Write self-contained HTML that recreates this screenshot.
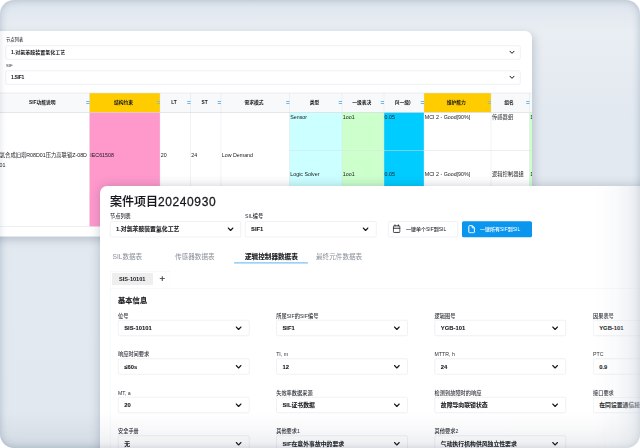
<!DOCTYPE html>
<html lang="zh-CN"><head><meta charset="utf-8"><title>案件项目20240930</title>
<style>
html,body{margin:0;padding:0;background:#fff;}
body{width:640px;height:448px;overflow:hidden;font-family:"Liberation Sans","Noto Sans CJK SC",sans-serif;}
#stage{position:relative;width:640px;height:448px;overflow:hidden;border-radius:14px;background:linear-gradient(180deg,#dee5ed 0px,#e9eef3 31px,#e3e9f0 110px,#e1e8ef 100%);box-shadow:inset 0 0 10px rgba(120,140,170,.22);}
#sc{position:absolute;left:0;top:0;width:2560px;height:1792px;transform:scale(0.25);transform-origin:0 0;}
#sc div,#sc svg{position:absolute;}
.card{background:#fff;}
.t{white-space:nowrap;}
#fadeR{position:absolute;right:0;top:186px;width:44px;height:262px;background:linear-gradient(90deg,rgba(216,222,229,0),rgba(216,222,229,.16) 50%,rgba(216,222,229,.6));}
#fadeB{position:absolute;left:0;bottom:0;width:640px;height:36px;background:linear-gradient(180deg,rgba(70,85,110,0),rgba(70,85,110,.035) 45%,rgba(70,85,110,.10));}
#vig{position:absolute;left:0;top:0;width:640px;height:448px;border-radius:14px;box-shadow:inset 0 0 7px rgba(90,110,140,.22);pointer-events:none;}
</style></head>
<body><div id="stage"><div id="sc">
<div class="card" style="left:-80px;top:124px;width:2208px;height:822.4px;border-radius:0 28px 0 0;box-shadow:6px 12px 32px rgba(40,60,90,.22);overflow:hidden">
<div class="t " style="left:104px;top:22.76px;line-height:24.08px;font-size:17.2px;font-weight:500;color:#2c3038;">节点列表</div>
<div style="left:102px;top:58px;width:2060px;height:56px;border:2px solid #dde1e6;border-radius:6px;box-sizing:border-box;background:#fff"></div>
<div class="t " style="left:124px;top:71.6px;line-height:28px;font-size:20px;font-weight:700;color:#16181c;">1.对氯苯胺装置氢化工艺</div>
<div class="t " style="left:104px;top:123.96px;line-height:24.08px;font-size:17.2px;font-weight:500;color:#2c3038;">SIF</div>
<div style="left:102px;top:158px;width:2060px;height:56px;border:2px solid #dde1e6;border-radius:6px;box-sizing:border-box;background:#fff"></div>
<div class="t " style="left:124px;top:171.6px;line-height:28px;font-size:20px;font-weight:700;color:#16181c;letter-spacing:-1.2px">1.SIF1</div>
<svg style="left:2116px;top:77.4px;width:24px;height:16.4px" viewBox="-1 -1 6.0 4.1"><path d="M0 0 L2.0 2.1 L4.0 0" fill="none" stroke="#16181c" stroke-width="1.0" stroke-linecap="round" stroke-linejoin="round"/></svg>
<svg style="left:2116px;top:177.4px;width:24px;height:16.4px" viewBox="-1 -1 6.0 4.1"><path d="M0 0 L2.0 2.1 L4.0 0" fill="none" stroke="#16181c" stroke-width="1.0" stroke-linecap="round" stroke-linejoin="round"/></svg>
<div style="left:0px;top:248px;width:2240px;height:78px;background:#f8f9fa"></div>
<div style="left:70px;top:248px;width:368px;height:78px;background:#f8f9fa"></div>
<div style="left:70px;top:326px;width:368px;height:456px;background:#fff"></div>
<div style="left:438px;top:248px;width:282px;height:78px;background:#ffcc00"></div>
<div style="left:438px;top:326px;width:282px;height:456px;background:#ff99cc"></div>
<div style="left:720px;top:248px;width:122px;height:78px;background:#f8f9fa"></div>
<div style="left:720px;top:326px;width:122px;height:456px;background:#fff"></div>
<div style="left:842px;top:248px;width:122px;height:78px;background:#f8f9fa"></div>
<div style="left:842px;top:326px;width:122px;height:456px;background:#fff"></div>
<div style="left:964px;top:248px;width:274px;height:78px;background:#f8f9fa"></div>
<div style="left:964px;top:326px;width:274px;height:456px;background:#fff"></div>
<div style="left:1238px;top:248px;width:210px;height:78px;background:#f8f9fa"></div>
<div style="left:1238px;top:326px;width:210px;height:456px;background:#ccffff"></div>
<div style="left:1448px;top:248px;width:168px;height:78px;background:#f8f9fa"></div>
<div style="left:1448px;top:326px;width:168px;height:456px;background:#ccffcc"></div>
<div style="left:1616px;top:248px;width:160px;height:78px;background:#f8f9fa"></div>
<div style="left:1616px;top:326px;width:160px;height:456px;background:#00ccff"></div>
<div style="left:1776px;top:248px;width:268px;height:78px;background:#ffcc00"></div>
<div style="left:1776px;top:326px;width:268px;height:456px;background:#fff"></div>
<div style="left:2044px;top:248px;width:154px;height:78px;background:#f8f9fa"></div>
<div style="left:2044px;top:326px;width:154px;height:456px;background:#fff"></div>
<div style="left:2198px;top:248px;width:122px;height:78px;background:#f8f9fa"></div>
<div style="left:2198px;top:326px;width:122px;height:456px;background:#ccffcc"></div>
<div style="left:0px;top:247px;width:2240px;height:2px;background:#dcdfe3"></div>
<div style="left:0px;top:324.8px;width:2240px;height:2.4px;background:#cdd1d6"></div>
<div style="left:0px;top:781px;width:2240px;height:2px;background:#dcdfe3"></div>
<div style="left:437px;top:248px;width:2px;height:534px;background:#dcdfe3;opacity:.8"></div>
<div style="left:719px;top:248px;width:2px;height:534px;background:#dcdfe3;opacity:.8"></div>
<div style="left:841px;top:248px;width:2px;height:534px;background:#dcdfe3;opacity:.8"></div>
<div style="left:963px;top:248px;width:2px;height:534px;background:#dcdfe3;opacity:.8"></div>
<div style="left:1237px;top:248px;width:2px;height:534px;background:#dcdfe3;opacity:.8"></div>
<div style="left:1447px;top:248px;width:2px;height:534px;background:#dcdfe3;opacity:.8"></div>
<div style="left:1615px;top:248px;width:2px;height:534px;background:#dcdfe3;opacity:.8"></div>
<div style="left:1775px;top:248px;width:2px;height:534px;background:#dcdfe3;opacity:.8"></div>
<div style="left:2043px;top:248px;width:2px;height:534px;background:#dcdfe3;opacity:.8"></div>
<div style="left:2197px;top:248px;width:2px;height:534px;background:#dcdfe3;opacity:.8"></div>
<div style="left:1238px;top:476px;width:1082px;height:2px;background:#dcdfe3"></div>
<div style="left:1238px;top:627px;width:1082px;height:2px;background:#dcdfe3"></div>
<div class="t " style="left:-350.8px;width:1200px;text-align:center;top:273.36px;line-height:26.88px;font-size:19.2px;font-weight:700;color:#16181c;">SIF功能说明</div>
<div style="left:424.8px;top:280.4px;width:12.8px;height:2.8px;background:#3fa2ea"></div>
<div style="left:424.8px;top:288.4px;width:12.8px;height:2.8px;background:#3fa2ea"></div>
<div class="t " style="left:-25.8px;width:1200px;text-align:center;top:273.36px;line-height:26.88px;font-size:19.2px;font-weight:700;color:#16181c;">结构约束</div>
<div style="left:706.8px;top:280.4px;width:12.8px;height:2.8px;background:#7fb9c9"></div>
<div style="left:706.8px;top:288.4px;width:12.8px;height:2.8px;background:#7fb9c9"></div>
<div class="t " style="left:176.2px;width:1200px;text-align:center;top:273.36px;line-height:26.88px;font-size:19.2px;font-weight:700;color:#16181c;">LT</div>
<div style="left:828.8px;top:280.4px;width:12.8px;height:2.8px;background:#3fa2ea"></div>
<div style="left:828.8px;top:288.4px;width:12.8px;height:2.8px;background:#3fa2ea"></div>
<div class="t " style="left:298.2px;width:1200px;text-align:center;top:273.36px;line-height:26.88px;font-size:19.2px;font-weight:700;color:#16181c;">ST</div>
<div style="left:950.8px;top:280.4px;width:12.8px;height:2.8px;background:#3fa2ea"></div>
<div style="left:950.8px;top:288.4px;width:12.8px;height:2.8px;background:#3fa2ea"></div>
<div class="t " style="left:496.2px;width:1200px;text-align:center;top:273.36px;line-height:26.88px;font-size:19.2px;font-weight:700;color:#16181c;">需求模式</div>
<div style="left:1224.8px;top:280.4px;width:12.8px;height:2.8px;background:#3fa2ea"></div>
<div style="left:1224.8px;top:288.4px;width:12.8px;height:2.8px;background:#3fa2ea"></div>
<div class="t " style="left:738.2px;width:1200px;text-align:center;top:273.36px;line-height:26.88px;font-size:19.2px;font-weight:700;color:#16181c;">类型</div>
<div style="left:1434.8px;top:280.4px;width:12.8px;height:2.8px;background:#3fa2ea"></div>
<div style="left:1434.8px;top:288.4px;width:12.8px;height:2.8px;background:#3fa2ea"></div>
<div class="t " style="left:927.2px;width:1200px;text-align:center;top:273.36px;line-height:26.88px;font-size:19.2px;font-weight:700;color:#16181c;">一级表决</div>
<div style="left:1602.8px;top:280.4px;width:12.8px;height:2.8px;background:#3fa2ea"></div>
<div style="left:1602.8px;top:288.4px;width:12.8px;height:2.8px;background:#3fa2ea"></div>
<div class="t " style="left:1091.2px;width:1200px;text-align:center;top:273.36px;line-height:26.88px;font-size:19.2px;font-weight:700;color:#16181c;">β(一级)</div>
<div style="left:1762.8px;top:280.4px;width:12.8px;height:2.8px;background:#3fa2ea"></div>
<div style="left:1762.8px;top:288.4px;width:12.8px;height:2.8px;background:#3fa2ea"></div>
<div class="t " style="left:1305.2px;width:1200px;text-align:center;top:273.36px;line-height:26.88px;font-size:19.2px;font-weight:700;color:#16181c;">维护能力</div>
<div style="left:2030.8px;top:280.4px;width:12.8px;height:2.8px;background:#7fb9c9"></div>
<div style="left:2030.8px;top:288.4px;width:12.8px;height:2.8px;background:#7fb9c9"></div>
<div class="t " style="left:1516.2px;width:1200px;text-align:center;top:273.36px;line-height:26.88px;font-size:19.2px;font-weight:700;color:#16181c;">组名</div>
<div style="left:2184.8px;top:280.4px;width:12.8px;height:2.8px;background:#3fa2ea"></div>
<div style="left:2184.8px;top:288.4px;width:12.8px;height:2.8px;background:#3fa2ea"></div>
<div class="t " style="left:-772.4px;width:1200px;text-align:right;top:481.96px;line-height:29.68px;font-size:21.2px;font-weight:400;color:#16181c;">氯合成旧塔R08D01压力高联锁Z-08D</div>
<div class="t " style="left:78px;top:521.16px;line-height:29.68px;font-size:21.2px;font-weight:400;color:#16181c;">01</div>
<div class="t " style="left:441.2px;top:481.96px;line-height:29.68px;font-size:21.2px;font-weight:400;color:#16181c;">IEC61508</div>
<div class="t " style="left:723.2px;top:481.96px;line-height:29.68px;font-size:21.2px;font-weight:400;color:#16181c;">20</div>
<div class="t " style="left:845.2px;top:481.96px;line-height:29.68px;font-size:21.2px;font-weight:400;color:#16181c;">24</div>
<div class="t " style="left:967.2px;top:481.96px;line-height:29.68px;font-size:21.2px;font-weight:400;color:#16181c;">Low Demand</div>
<div class="t " style="left:1241.2px;top:329.16px;line-height:29.68px;font-size:21.2px;font-weight:400;color:#16181c;">Sensor</div>
<div class="t " style="left:1451.2px;top:329.16px;line-height:29.68px;font-size:21.2px;font-weight:400;color:#16181c;">1oo1</div>
<div class="t " style="left:1618.4px;top:329.16px;line-height:29.68px;font-size:21.2px;font-weight:400;color:#16181c;">0.05</div>
<div class="t " style="left:1779.2px;top:329.16px;line-height:29.68px;font-size:21.2px;font-weight:400;color:#16181c;">MCI 2 - Good[90%]</div>
<div class="t " style="left:2048px;top:329.16px;line-height:29.68px;font-size:21.2px;font-weight:400;color:#16181c;">传感器组</div>
<div class="t " style="left:1241.2px;top:557.16px;line-height:29.68px;font-size:21.2px;font-weight:400;color:#16181c;">Logic Solver</div>
<div class="t " style="left:1451.2px;top:557.16px;line-height:29.68px;font-size:21.2px;font-weight:400;color:#16181c;">1oo1</div>
<div class="t " style="left:1618.4px;top:557.16px;line-height:29.68px;font-size:21.2px;font-weight:400;color:#16181c;">0.05</div>
<div class="t " style="left:1779.2px;top:557.16px;line-height:29.68px;font-size:21.2px;font-weight:400;color:#16181c;">MCI 2 - Good[90%]</div>
<div class="t " style="left:2048px;top:557.16px;line-height:29.68px;font-size:21.2px;font-weight:400;color:#16181c;">逻辑控制器组</div>
<div class="t " style="left:2201.2px;top:557.16px;line-height:29.68px;font-size:21.2px;font-weight:400;color:#16181c;">1</div>
<div class="t " style="left:2201.2px;top:329.16px;line-height:29.68px;font-size:21.2px;font-weight:400;color:#16181c;">1</div>
</div>
<div class="card" style="left:400.4px;top:744px;width:2240px;height:1200px;border-radius:28px 0 0 0;box-shadow:0 2px 44px rgba(30,50,80,.24)">
<div class="t " style="left:39.6px;top:27.6px;line-height:67.2px;font-size:48px;font-weight:500;color:#16181c;-webkit-text-stroke:0.48px #16181c">案件项目<span style="letter-spacing:2.48px;margin-left:-0.4px;-webkit-text-stroke:1.12px #16181c">20240930</span></div>
<div class="t " style="left:39.6px;top:106.24px;line-height:29.12px;font-size:20.8px;font-weight:500;color:#2c3038;">节点列表</div>
<div style="left:39.6px;top:141.2px;width:524px;height:64px;border:2px solid #dfe3e7;border-radius:6.4px;box-sizing:border-box;background:#fff"></div>
<div class="t " style="left:63.6px;top:156.42px;line-height:32.76px;font-size:23.4px;font-weight:700;color:#16181c;-webkit-text-stroke:0.28px #16181c">1.对氯苯胺装置氢化工艺</div>
<svg style="left:508.2px;top:164.2px;width:26.8px;height:18px" viewBox="-1 -1 6.7 4.5"><path d="M0 0 L2.35 2.5 L4.7 0" fill="none" stroke="#16181c" stroke-width="1.1" stroke-linecap="round" stroke-linejoin="round"/></svg>
<div class="t " style="left:579.6px;top:106.24px;line-height:29.12px;font-size:20.8px;font-weight:500;color:#2c3038;">SIL编号</div>
<div style="left:579.6px;top:141.2px;width:526px;height:64px;border:2px solid #dfe3e7;border-radius:6.4px;box-sizing:border-box;background:#fff"></div>
<div class="t " style="left:603.6px;top:156.42px;line-height:32.76px;font-size:23.4px;font-weight:700;color:#16181c;-webkit-text-stroke:0.28px #16181c">SIF1</div>
<svg style="left:1048.2px;top:164.2px;width:26.8px;height:18px" viewBox="-1 -1 6.7 4.5"><path d="M0 0 L2.35 2.5 L4.7 0" fill="none" stroke="#16181c" stroke-width="1.1" stroke-linecap="round" stroke-linejoin="round"/></svg>
<div style="left:1151.6px;top:140.8px;width:280px;height:64px;border:2px solid #dfe3e7;border-radius:6.4px;box-sizing:border-box;background:#fff"></div>
<svg style="left:1170.8px;top:153.2px;width:31.2px;height:35.2px" viewBox="0 0 7.8 8.8"><rect x="0.55" y="1.6" width="6.7" height="6.6" rx="0.9" fill="none" stroke="#16181c" stroke-width="0.85"/><path d="M0.6 4.0H7.2M2.2 0.4V1.7M5.6 0.4V1.7" stroke="#16181c" stroke-width="0.85" fill="none" stroke-linecap="round"/></svg>
<div class="t " style="left:1223.6px;top:158.8px;line-height:28px;font-size:20px;font-weight:500;color:#16181c;">一键单个SIF到SIL</div>
<div style="left:1447.6px;top:140.8px;width:280px;height:64px;background:#0a96ef;border-radius:6.4px"></div>
<svg style="left:1471.6px;top:156px;width:28px;height:33.6px" viewBox="0 0 7 8.4"><path d="M1.6 0.6H4.3L6.4 2.7V7.0Q6.4 7.8 5.6 7.8H1.6Q0.8 7.8 0.8 7.0V1.4Q0.8 0.6 1.6 0.6ZM4.2 0.7V2.8H6.3" fill="none" stroke="#fff" stroke-width="1" stroke-linejoin="round"/></svg>
<div class="t " style="left:1519.6px;top:158.8px;line-height:28px;font-size:20px;font-weight:500;color:#ffffff;">一键所有SIF到SIL</div>
<div class="t " style="left:49.6px;top:264.32px;line-height:36.96px;font-size:26.4px;font-weight:400;color:#8a8f98;">SIL数据表</div>
<div class="t " style="left:299.6px;top:264.32px;line-height:36.96px;font-size:26.4px;font-weight:400;color:#8a8f98;">传感器数据表</div>
<div class="t " style="left:579.6px;top:264.32px;line-height:36.96px;font-size:26.4px;font-weight:700;color:#16181c;-webkit-text-stroke:0.48px #16181c">逻辑控制器数据表</div>
<div class="t " style="left:863.6px;top:264.32px;line-height:36.96px;font-size:26.4px;font-weight:400;color:#8a8f98;">最终元件数据表</div>
<div style="left:535.6px;top:305.2px;width:296px;height:4.8px;background:#79c2f7;border-radius:2px"></div>
<div style="left:39.6px;top:340px;width:242px;height:70px;border:2px solid #eef0f2;border-bottom:none;box-sizing:border-box;border-radius:4px 4px 0 0"></div>
<div style="left:47.6px;top:348px;width:164px;height:48px;background:#eeeeef;border-radius:4px"></div>
<div class="t " style="left:75.6px;top:357.52px;line-height:31.36px;font-size:22.4px;font-weight:700;color:#16181c;">SIS-10101</div>
<div class="t " style="left:-351.6px;width:1200px;text-align:center;top:346.2px;line-height:53.2px;font-size:38px;font-weight:400;color:#2c3038;-webkit-text-stroke:0.8px #2c3038">+</div>
<div style="left:39.6px;top:408.8px;width:2240px;height:800px;border:2px solid #eef0f2;box-sizing:border-box;border-radius:0 4px 0 0"></div>
<div class="t " style="left:71.6px;top:437.56px;line-height:40.88px;font-size:29.2px;font-weight:700;color:#16181c;-webkit-text-stroke:0.6px #16181c">基本信息</div>
<div class="t " style="left:71.6px;top:503.84px;line-height:29.12px;font-size:20.8px;font-weight:500;color:#2c3038;">位号</div>
<div style="left:71.6px;top:535.6px;width:526px;height:64.4px;border:2px solid #dfe3e7;border-radius:6.4px;box-sizing:border-box;background:#fff"></div>
<div class="t " style="left:96.4px;top:552.42px;line-height:32.76px;font-size:23.4px;font-weight:700;color:#16181c;-webkit-text-stroke:0.28px #16181c">SIS-10101</div>
<svg style="left:540.6px;top:560.2px;width:26.8px;height:18px" viewBox="-1 -1 6.7 4.5"><path d="M0 0 L2.35 2.5 L4.7 0" fill="none" stroke="#16181c" stroke-width="1.1" stroke-linecap="round" stroke-linejoin="round"/></svg>
<div class="t " style="left:704.4px;top:503.84px;line-height:29.12px;font-size:20.8px;font-weight:500;color:#2c3038;">所属SIF的SIF编号</div>
<div style="left:704.4px;top:535.6px;width:526px;height:64.4px;border:2px solid #dfe3e7;border-radius:6.4px;box-sizing:border-box;background:#fff"></div>
<div class="t " style="left:729.2px;top:552.42px;line-height:32.76px;font-size:23.4px;font-weight:700;color:#16181c;-webkit-text-stroke:0.28px #16181c">SIF1</div>
<svg style="left:1173.4px;top:560.2px;width:26.8px;height:18px" viewBox="-1 -1 6.7 4.5"><path d="M0 0 L2.35 2.5 L4.7 0" fill="none" stroke="#16181c" stroke-width="1.1" stroke-linecap="round" stroke-linejoin="round"/></svg>
<div class="t " style="left:1338px;top:503.84px;line-height:29.12px;font-size:20.8px;font-weight:500;color:#2c3038;">逻辑图号</div>
<div style="left:1338px;top:535.6px;width:526px;height:64.4px;border:2px solid #dfe3e7;border-radius:6.4px;box-sizing:border-box;background:#fff"></div>
<div class="t " style="left:1362.8px;top:552.42px;line-height:32.76px;font-size:23.4px;font-weight:700;color:#16181c;-webkit-text-stroke:0.28px #16181c">YGB-101</div>
<svg style="left:1807px;top:560.2px;width:26.8px;height:18px" viewBox="-1 -1 6.7 4.5"><path d="M0 0 L2.35 2.5 L4.7 0" fill="none" stroke="#16181c" stroke-width="1.1" stroke-linecap="round" stroke-linejoin="round"/></svg>
<div class="t " style="left:1971.6px;top:503.84px;line-height:29.12px;font-size:20.8px;font-weight:500;color:#2c3038;">因果表号</div>
<div style="left:1971.6px;top:535.6px;width:526px;height:64.4px;border:2px solid #dfe3e7;border-radius:6.4px;box-sizing:border-box;background:#fff"></div>
<div class="t " style="left:1996.4px;top:552.42px;line-height:32.76px;font-size:23.4px;font-weight:700;color:#16181c;-webkit-text-stroke:0.28px #16181c">YGB-101</div>
<svg style="left:2440.6px;top:560.2px;width:26.8px;height:18px" viewBox="-1 -1 6.7 4.5"><path d="M0 0 L2.35 2.5 L4.7 0" fill="none" stroke="#16181c" stroke-width="1.1" stroke-linecap="round" stroke-linejoin="round"/></svg>
<div class="t " style="left:71.6px;top:657.84px;line-height:29.12px;font-size:20.8px;font-weight:500;color:#2c3038;">响应时间要求</div>
<div style="left:71.6px;top:689.6px;width:526px;height:64.4px;border:2px solid #dfe3e7;border-radius:6.4px;box-sizing:border-box;background:#fff"></div>
<div class="t " style="left:96.4px;top:706.42px;line-height:32.76px;font-size:23.4px;font-weight:700;color:#16181c;-webkit-text-stroke:0.28px #16181c">≤60s</div>
<svg style="left:540.6px;top:714.2px;width:26.8px;height:18px" viewBox="-1 -1 6.7 4.5"><path d="M0 0 L2.35 2.5 L4.7 0" fill="none" stroke="#16181c" stroke-width="1.1" stroke-linecap="round" stroke-linejoin="round"/></svg>
<div class="t " style="left:704.4px;top:657.84px;line-height:29.12px;font-size:20.8px;font-weight:500;color:#2c3038;">TI, m</div>
<div style="left:704.4px;top:689.6px;width:526px;height:64.4px;border:2px solid #dfe3e7;border-radius:6.4px;box-sizing:border-box;background:#fff"></div>
<div class="t " style="left:729.2px;top:706.42px;line-height:32.76px;font-size:23.4px;font-weight:700;color:#16181c;-webkit-text-stroke:0.28px #16181c">12</div>
<svg style="left:1173.4px;top:714.2px;width:26.8px;height:18px" viewBox="-1 -1 6.7 4.5"><path d="M0 0 L2.35 2.5 L4.7 0" fill="none" stroke="#16181c" stroke-width="1.1" stroke-linecap="round" stroke-linejoin="round"/></svg>
<div class="t " style="left:1338px;top:657.84px;line-height:29.12px;font-size:20.8px;font-weight:500;color:#2c3038;">MTTR, h</div>
<div style="left:1338px;top:689.6px;width:526px;height:64.4px;border:2px solid #dfe3e7;border-radius:6.4px;box-sizing:border-box;background:#fff"></div>
<div class="t " style="left:1362.8px;top:706.42px;line-height:32.76px;font-size:23.4px;font-weight:700;color:#16181c;-webkit-text-stroke:0.28px #16181c">24</div>
<svg style="left:1807px;top:714.2px;width:26.8px;height:18px" viewBox="-1 -1 6.7 4.5"><path d="M0 0 L2.35 2.5 L4.7 0" fill="none" stroke="#16181c" stroke-width="1.1" stroke-linecap="round" stroke-linejoin="round"/></svg>
<div class="t " style="left:1971.6px;top:657.84px;line-height:29.12px;font-size:20.8px;font-weight:500;color:#2c3038;">PTC</div>
<div style="left:1971.6px;top:689.6px;width:526px;height:64.4px;border:2px solid #dfe3e7;border-radius:6.4px;box-sizing:border-box;background:#fff"></div>
<div class="t " style="left:1996.4px;top:706.42px;line-height:32.76px;font-size:23.4px;font-weight:700;color:#16181c;-webkit-text-stroke:0.28px #16181c">0.9</div>
<svg style="left:2440.6px;top:714.2px;width:26.8px;height:18px" viewBox="-1 -1 6.7 4.5"><path d="M0 0 L2.35 2.5 L4.7 0" fill="none" stroke="#16181c" stroke-width="1.1" stroke-linecap="round" stroke-linejoin="round"/></svg>
<div class="t " style="left:71.6px;top:811.84px;line-height:29.12px;font-size:20.8px;font-weight:500;color:#2c3038;">MT, a</div>
<div style="left:71.6px;top:843.6px;width:526px;height:64.4px;border:2px solid #dfe3e7;border-radius:6.4px;box-sizing:border-box;background:#fff"></div>
<div class="t " style="left:96.4px;top:860.42px;line-height:32.76px;font-size:23.4px;font-weight:700;color:#16181c;-webkit-text-stroke:0.28px #16181c">20</div>
<svg style="left:540.6px;top:868.2px;width:26.8px;height:18px" viewBox="-1 -1 6.7 4.5"><path d="M0 0 L2.35 2.5 L4.7 0" fill="none" stroke="#16181c" stroke-width="1.1" stroke-linecap="round" stroke-linejoin="round"/></svg>
<div class="t " style="left:704.4px;top:811.84px;line-height:29.12px;font-size:20.8px;font-weight:500;color:#2c3038;">失效率数据来源</div>
<div style="left:704.4px;top:843.6px;width:526px;height:64.4px;border:2px solid #dfe3e7;border-radius:6.4px;box-sizing:border-box;background:#fff"></div>
<div class="t " style="left:729.2px;top:860.42px;line-height:32.76px;font-size:23.4px;font-weight:700;color:#16181c;-webkit-text-stroke:0.28px #16181c">SIL证书数据</div>
<svg style="left:1173.4px;top:868.2px;width:26.8px;height:18px" viewBox="-1 -1 6.7 4.5"><path d="M0 0 L2.35 2.5 L4.7 0" fill="none" stroke="#16181c" stroke-width="1.1" stroke-linecap="round" stroke-linejoin="round"/></svg>
<div class="t " style="left:1338px;top:811.84px;line-height:29.12px;font-size:20.8px;font-weight:500;color:#2c3038;">检测到故障时的响应</div>
<div style="left:1338px;top:843.6px;width:526px;height:64.4px;border:2px solid #dfe3e7;border-radius:6.4px;box-sizing:border-box;background:#fff"></div>
<div class="t " style="left:1362.8px;top:860.42px;line-height:32.76px;font-size:23.4px;font-weight:700;color:#16181c;-webkit-text-stroke:0.28px #16181c">故障导向联锁状态</div>
<svg style="left:1807px;top:868.2px;width:26.8px;height:18px" viewBox="-1 -1 6.7 4.5"><path d="M0 0 L2.35 2.5 L4.7 0" fill="none" stroke="#16181c" stroke-width="1.1" stroke-linecap="round" stroke-linejoin="round"/></svg>
<div class="t " style="left:1971.6px;top:811.84px;line-height:29.12px;font-size:20.8px;font-weight:500;color:#2c3038;">接口要求</div>
<div style="left:1971.6px;top:843.6px;width:526px;height:64.4px;border:2px solid #dfe3e7;border-radius:6.4px;box-sizing:border-box;background:#fff"></div>
<div class="t " style="left:1996.4px;top:860.42px;line-height:32.76px;font-size:23.4px;font-weight:700;color:#16181c;-webkit-text-stroke:0.28px #16181c">在同设置通信接口</div>
<svg style="left:2440.6px;top:868.2px;width:26.8px;height:18px" viewBox="-1 -1 6.7 4.5"><path d="M0 0 L2.35 2.5 L4.7 0" fill="none" stroke="#16181c" stroke-width="1.1" stroke-linecap="round" stroke-linejoin="round"/></svg>
<div class="t " style="left:71.6px;top:965.84px;line-height:29.12px;font-size:20.8px;font-weight:500;color:#2c3038;">安全手册</div>
<div style="left:71.6px;top:997.6px;width:526px;height:64.4px;border:2px solid #dfe3e7;border-radius:6.4px;box-sizing:border-box;background:#fff"></div>
<div class="t " style="left:96.4px;top:1014.42px;line-height:32.76px;font-size:23.4px;font-weight:700;color:#16181c;-webkit-text-stroke:0.28px #16181c">无</div>
<svg style="left:540.6px;top:1022.2px;width:26.8px;height:18px" viewBox="-1 -1 6.7 4.5"><path d="M0 0 L2.35 2.5 L4.7 0" fill="none" stroke="#16181c" stroke-width="1.1" stroke-linecap="round" stroke-linejoin="round"/></svg>
<div class="t " style="left:704.4px;top:965.84px;line-height:29.12px;font-size:20.8px;font-weight:500;color:#2c3038;">其他要求1</div>
<div style="left:704.4px;top:997.6px;width:526px;height:64.4px;border:2px solid #dfe3e7;border-radius:6.4px;box-sizing:border-box;background:#fff"></div>
<div class="t " style="left:729.2px;top:1014.42px;line-height:32.76px;font-size:23.4px;font-weight:700;color:#16181c;-webkit-text-stroke:0.28px #16181c">SIF在意外事故中的要求</div>
<svg style="left:1173.4px;top:1022.2px;width:26.8px;height:18px" viewBox="-1 -1 6.7 4.5"><path d="M0 0 L2.35 2.5 L4.7 0" fill="none" stroke="#16181c" stroke-width="1.1" stroke-linecap="round" stroke-linejoin="round"/></svg>
<div class="t " style="left:1338px;top:965.84px;line-height:29.12px;font-size:20.8px;font-weight:500;color:#2c3038;">其他要求2</div>
<div style="left:1338px;top:997.6px;width:526px;height:64.4px;border:2px solid #dfe3e7;border-radius:6.4px;box-sizing:border-box;background:#fff"></div>
<div class="t " style="left:1362.8px;top:1014.42px;line-height:32.76px;font-size:23.4px;font-weight:700;color:#16181c;-webkit-text-stroke:0.28px #16181c">气动执行机构供风独立性要求</div>
<svg style="left:1807px;top:1022.2px;width:26.8px;height:18px" viewBox="-1 -1 6.7 4.5"><path d="M0 0 L2.35 2.5 L4.7 0" fill="none" stroke="#16181c" stroke-width="1.1" stroke-linecap="round" stroke-linejoin="round"/></svg>
</div>
</div><div id="fadeB"></div><div id="fadeR"></div><div id="vig"></div></div></body></html>
